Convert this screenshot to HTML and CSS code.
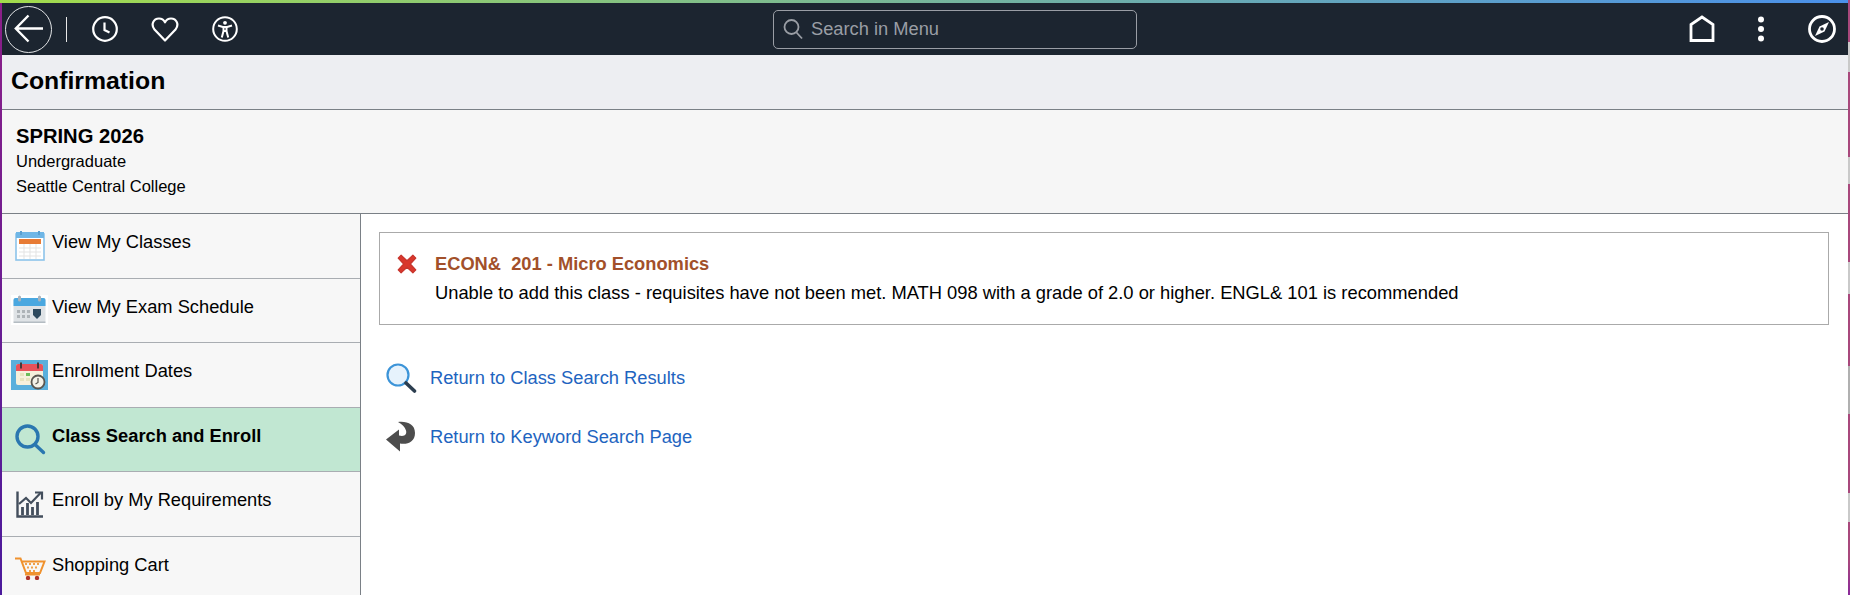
FILE: index.html
```html
<!DOCTYPE html>
<html lang="en">
<head>
<meta charset="utf-8">
<title>Confirmation</title>
<link rel="stylesheet" href="styles.css">
</head>
<body>
<div class="strip-left"></div>
<div class="page">
  <div class="accent"></div>
  <header class="topbar">
    <div class="tools">
      <button class="back" aria-label="Back">
        <svg width="30" height="30" viewBox="0 0 30 30" fill="none" stroke="#fff" stroke-width="2.4"><path d="M2 14.500H29M14.500 1.500L1.800 14.500L14.500 27.500"/></svg>
      </button>
      <span class="divider"></span>
      <svg class="tool" width="28" height="28" viewBox="0 0 28 28" fill="none" stroke="#fff" stroke-width="2.2"><circle cx="14" cy="14" r="11.800"/><path d="M13.500 7.500V15L18.500 17.500"/></svg>
      <svg class="tool" width="28" height="28" viewBox="0 0 28 28" fill="none" stroke="#fff" stroke-width="2.2"><path d="M14 25.500L3.500 14.500C-.5 9.500 2.500 3.500 8 3.500C10.500 3.500 12.800 5 14 7.300C15.200 5 17.500 3.500 20 3.500C25.500 3.500 28.500 9.500 24.500 14.500Z" stroke-linejoin="round"/></svg>
      <svg class="tool" width="28" height="28" viewBox="0 0 28 28" fill="none" stroke="#fff"><circle cx="14" cy="14" r="11.800" stroke-width="2"/><circle cx="14" cy="7.800" r="1.900" fill="#fff" stroke="none"/><path d="M7 10.500L11.800 12H16.200L21 10.500M12.500 12V16L10.800 22.500M15.500 12V16L17.200 22.500M12.500 16H15.500" stroke-width="2"/></svg>
    </div>
    <div class="search">
      <svg width="20" height="22" viewBox="0 0 20 22" fill="none" stroke="#9a9ea5" stroke-width="1.800"><circle cx="8.500" cy="9" r="7"/><path d="M13.500 14.500L19 20.500"/></svg>
      <span>Search in Menu</span>
    </div>
    <div class="right-tools">
      <svg width="26" height="28" viewBox="0 0 26 28" fill="none" stroke="#fff" stroke-width="2.800"><path d="M2 25.500V9.500L13 2L24 9.500V25.500Z"/></svg>
      <svg class="dots" width="10" height="28" viewBox="0 0 10 28" fill="#fff"><circle cx="5" cy="4.500" r="3"/><circle cx="5" cy="14" r="3"/><circle cx="5" cy="23.500" r="3"/></svg>
      <svg width="28" height="28" viewBox="0 0 28 28" fill="none" stroke="#fff" stroke-width="2.800"><circle cx="14" cy="14" r="12.500"/><path d="M21 7L16.500 16.500L7 21L11.500 11.500Z" fill="#fff" stroke="none"/><circle cx="14" cy="14" r="1.800" fill="#1c2530" stroke="none"/></svg>
    </div>
  </header>
  <div class="titlebar"><h1>Confirmation</h1></div>
  <section class="term">
    <div class="term-name">SPRING 2026</div>
    <div class="term-line">Undergraduate</div>
    <div class="term-line">Seattle Central College</div>
  </section>
  <div class="columns">
    <nav class="sidenav">
      <a class="nav-item">
        <span class="nav-icon">
          <svg width="30" height="30" viewBox="0 0 30 30"><rect x="1" y="3" width="28" height="26" fill="#fff" stroke="#8cc4ea" stroke-width="1.600"/><rect x="1" y="1" width="28" height="6" fill="#6fb6e6"/><rect x="5" y="0" width="2" height="4" fill="#5a9fd0"/><rect x="23" y="0" width="2" height="4" fill="#5a9fd0"/><rect x="4" y="8" width="22" height="5" fill="#e77b35"/><path d="M4 17H26M4 21H26M4 25H26M9 13V28M15 13V28M21 13V28" stroke="#e3e3e3"/></svg>
        </span>
        <span class="nav-label">View My Classes</span>
      </a>
      <a class="nav-item">
        <span class="nav-icon">
          <svg width="37" height="30" viewBox="0 0 37 30"><rect width="37" height="30" fill="#fff"/><rect x="2.500" y="3" width="32" height="25" rx="2" fill="#dfe3e6"/><path d="M2.500 5a2 2 0 0 1 2-2h28a2 2 0 0 1 2 2v6h-32Z" fill="#4aa8e0"/><rect x="7" y="0.500" width="3" height="6" rx="1.500" fill="#a9b4bc"/><rect x="27" y="0.500" width="3" height="6" rx="1.500" fill="#a9b4bc"/><path d="M6 15h3v3h-3ZM11 15h3v3h-3ZM16 15h3v3h-3ZM6 20h3v3h-3ZM11 20h3v3h-3ZM16 20h3v3h-3Z" fill="#aeb4b8"/><path d="M22 14h8v6l-4 4l-4-4Z" fill="#2e4a5e"/><rect x="2.500" y="26.500" width="32" height="1.500" fill="#b4bcc2"/></svg>
        </span>
        <span class="nav-label">View My Exam Schedule</span>
      </a>
      <a class="nav-item">
        <span class="nav-icon">
          <svg width="37" height="30" viewBox="0 0 37 30"><rect width="37" height="30" fill="#5aafdc"/><rect x="5" y="4" width="27" height="21" rx="2" fill="#f6f0dc"/><path d="M5 6a2 2 0 0 1 2-2h23a2 2 0 0 1 2 2v5h-27Z" fill="#e9525a"/><rect x="9" y="2.500" width="2" height="6" fill="#4a3a3a"/><rect x="26" y="2.500" width="2" height="6" fill="#4a3a3a"/><rect x="9" y="13" width="4" height="3" fill="#e6e2bd"/><rect x="15" y="13" width="4" height="3" fill="#6cbb5a"/><rect x="9" y="18" width="4" height="3" fill="#e6e2bd"/><rect x="15" y="18" width="4" height="3" fill="#e6e2bd"/><circle cx="27" cy="22" r="6.500" fill="#f5f2e8" stroke="#5a5650" stroke-width="1.800"/><path d="M27 18v4.500l-2.500 1.500" stroke="#5a5650" stroke-width="1.200" fill="none"/></svg>
        </span>
        <span class="nav-label">Enrollment Dates</span>
      </a>
      <a class="nav-item active">
        <span class="nav-icon">
          <svg width="32" height="32" viewBox="0 0 32 32" fill="none" stroke="#2a77b0" stroke-width="3.400"><circle cx="13.500" cy="13.500" r="10.500"/><path d="M21 21.500L29.500 29.500" stroke-linecap="round"/></svg>
        </span>
        <span class="nav-label">Class Search and Enroll</span>
      </a>
      <a class="nav-item">
        <span class="nav-icon">
          <svg width="28" height="28" viewBox="0 0 28 28" fill="none" stroke="#434e5c"><path d="M1.500 1.500V26.500H27" stroke-width="2.400"/><path d="M3 14L10 8L15 13L24.500 3" stroke-width="2.200"/><path d="M19 2.500H26V9.500" stroke-width="2.200"/><path d="M6.500 25V17M11.500 25V13M16.500 25V17M21.500 25V12" stroke-width="2.800"/></svg>
        </span>
        <span class="nav-label">Enroll by My Requirements</span>
      </a>
      <a class="nav-item">
        <span class="nav-icon">
          <svg width="32" height="24" viewBox="0 0 32 24"><path d="M1 2.500H6.500L12 17H26L30.500 5.500H8" fill="none" stroke="#f0922e" stroke-width="2"/><path d="M11 7h2v2h-2ZM15 7h2v2h-2ZM19 7h2v2h-2ZM23 7h2v2h-2ZM13 10.500h2v2h-2ZM17 10.500h2v2h-2ZM21 10.500h2v2h-2ZM15 14h2v2h-2ZM19 14h2v2h-2Z" fill="#f0a04a"/><rect x="11" y="18" width="15" height="1.500" fill="#f0922e"/><circle cx="14" cy="22" r="2.200" fill="#b0332a"/><circle cx="23" cy="22" r="2.200" fill="#b0332a"/></svg>
        </span>
        <span class="nav-label">Shopping Cart</span>
      </a>
    </nav>
    <main class="content">
      <div class="message">
        <svg class="error-x" width="20" height="20" viewBox="1.500 1.500 17 17"><path d="M2.500 5L5 2.500L10 7.200L15 2.500L17.500 5L12.800 10L17.500 15L15 17.500L10 12.800L5 17.500L2.500 15L7.200 10Z" fill="#d9372c" stroke="#c6342c" stroke-width="1" stroke-linejoin="round"/></svg>
        <div>
          <div class="msg-title">ECON&amp;&nbsp; 201 - Micro Economics</div>
          <div class="msg-body">Unable to add this class - requisites have not been met. MATH 098 with a grade of 2.0 or higher. ENGL&amp; 101 is recommended</div>
        </div>
      </div>
      <div class="links">
        <a class="link-row">
          <svg width="32" height="32" viewBox="0 0 32 32" fill="none"><circle cx="13" cy="13" r="10.500" fill="#e6f2fc" stroke="#3c94d8" stroke-width="2.200"/><path d="M21 21L29.500 29" stroke="#2c3e50" stroke-width="3.600" stroke-linecap="round"/></svg>
          <span>Return to Class Search Results</span>
        </a>
        <a class="link-row">
          <svg width="32" height="32" viewBox="0 0 32 32"><path d="M13 1C22 0 30 3 30 12C30 21 22 24 15 22.500L15 30.500L1 18.500L14 8.500V14.500C20 16 22 13 21 9.500C20 6 17 3 13 1Z" fill="#4d4d4d"/></svg>
          <span>Return to Keyword Search Page</span>
        </a>
      </div>
    </main>
  </div>
</div>
<div class="strip-right"></div>
</body>
</html>
```
FILE: styles.css
```css
* { box-sizing: border-box; }
html, body { height: 100%; }
body {
  margin: 0;
  display: flex;
  overflow: hidden;
  font-family: "Liberation Sans", Arial, sans-serif;
  color: #000;
  background: #fff;
}
.strip-left {
  width: 2px;
  flex: none;
  background: linear-gradient(180deg, #8c1f88, #4b1a9c);
}
.strip-right {
  width: 2px;
  flex: none;
  background: linear-gradient(180deg,
    #a8487c 0 42px, #c9c9c9 42px 72px, #a8487c 72px 157px, #c9c9c9 157px 184px,
    #a8487c 184px 262px, #c9c9c9 262px 294px, #a8487c 294px 366px, #b0b0b0 366px 414px,
    #a8487c 414px 493px, #c9c9c9 493px 522px, #a8487c 522px 560px, #8a2a9a 595px);
}
.page {
  flex: 1;
  min-width: 0;
  display: flex;
  flex-direction: column;
}
.accent {
  height: 3px;
  flex: none;
  margin-left: -2px;
  margin-right: -2px;
  background: linear-gradient(90deg, #a3dc4c, #4a90ea);
}
.topbar {
  height: 52px;
  flex: none;
  background: #1c2530;
  display: grid;
  grid-template-columns: 768px 364px 1fr;
  align-items: center;
  padding-left: 3px;
}
.tools {
  display: flex;
  align-items: center;
}
.back {
  width: 47px;
  height: 47px;
  padding: 0 0 0 1px;
  border-radius: 50%;
  border: 1px solid #e4e6e8;
  background: none;
  display: flex;
  align-items: center;
  justify-content: center;
}
.divider {
  width: 1px;
  height: 25px;
  background: #e8e8e8;
  margin-left: 14px;
  margin-right: 24px;
}
.tool { margin-right: 32px; }
.search {
  height: 39px;
  border: 1px solid #9a9ea5;
  border-radius: 5px;
  display: flex;
  align-items: center;
  gap: 8px;
  padding-left: 9px;
  color: #9a9ea5;
  font-size: 18.300px;
}
.right-tools {
  display: flex;
  align-items: center;
  justify-content: flex-end;
  padding-right: 12px;
}
.dots { margin: 0 42px 0 41px; }
.titlebar {
  height: 55px;
  flex: none;
  background: #edeef2;
  border-bottom: 1px solid #7a8086;
  display: flex;
  align-items: center;
  padding: 0 0 2px 9px;
}
h1 {
  margin: 0;
  font-size: 24.800px;
  font-weight: 700;
}
.term {
  height: 104px;
  flex: none;
  background: #f6f6f6;
  border-bottom: 1px solid #7a8086;
  padding: 13px 0 0 14px;
}
.term-name {
  font-size: 20.200px;
  font-weight: 700;
  line-height: 26px;
}
.term-line {
  font-size: 16.500px;
  line-height: 25px;
}
.columns {
  flex: 1;
  min-height: 0;
  display: flex;
}
.sidenav {
  width: 359px;
  flex: none;
  background: #f7f7f7;
  border-right: 1px solid #7a8086;
  overflow: hidden;
}
.nav-item {
  height: 64.500px;
  display: flex;
  align-items: center;
  border-bottom: 1px solid #a9adb2;
  font-size: 18.300px;
}
.nav-item.active {
  background: #c1e7d2;
  font-weight: 700;
}
.nav-icon {
  width: 50px;
  padding-left: 5px;
  flex: none;
  display: flex;
  align-items: center;
  justify-content: center;
}
.nav-label { padding-bottom: 7px; }
.content {
  flex: 1;
  min-width: 0;
  padding: 18px 19px 0 18px;
}
.message {
  height: 93px;
  border: 1px solid #aaa;
  display: flex;
  align-items: flex-start;
  padding: 20px 0 0 17px;
  gap: 18px;
}
.error-x { margin-top: 1px; flex: none; }
.msg-title {
  color: #a2502a;
  font-weight: 700;
  font-size: 18.300px;
  line-height: 22px;
  margin-bottom: 7px;
}
.msg-body {
  font-size: 18.330px;
  line-height: 22px;
}
.links {
  padding-top: 37px;
  display: flex;
  flex-direction: column;
  gap: 27px;
}
.link-row {
  height: 32px;
  display: flex;
  align-items: center;
  gap: 13px;
  padding-left: 6px;
  color: #1e64c0;
  font-size: 18.300px;
}
```
